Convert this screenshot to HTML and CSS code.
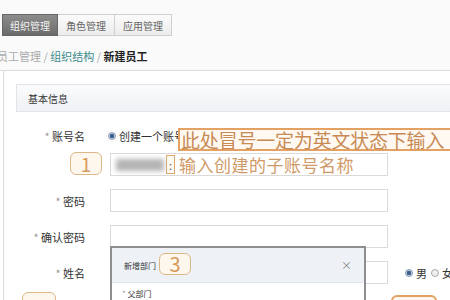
FILE: index.html
```html
<!DOCTYPE html>
<html lang="zh">
<head>
<meta charset="utf-8">
<link rel="stylesheet" href="styles.css">
</head>
<body>
<div class="top">
  <div class="tabs">
    <div class="tab active">组织管理</div>
    <div class="tab">角色管理</div>
    <div class="tab">应用管理</div>
  </div>
  <div class="crumb"><span class="c-gray">员工管理</span><span class="sep"> / </span><span class="c-link">组织结构</span><span class="sep"> / </span><span class="c-cur">新建员工</span></div>
</div>
<div class="main">
  <div class="panel-head">基本信息</div>
  <div class="form">
    <div class="row row-first">
      <div class="label"><span class="star">*</span> 账号名</div>
      <div class="radio-line"><span class="radio on"></span>创建一个账号</div>
    </div>
    <div class="row">
      <div class="label"></div>
      <div class="input">
        <span class="blob"></span>
        <span class="colon">:</span>
        <span class="hint">输入创建的子账号名称</span>
      </div>
    </div>
    <div class="row">
      <div class="label"><span class="star">*</span> 密码</div>
      <div class="input"></div>
    </div>
    <div class="row">
      <div class="label"><span class="star">*</span> 确认密码</div>
      <div class="input"></div>
    </div>
    <div class="row">
      <div class="label"><span class="star">*</span> 姓名</div>
      <div class="input"></div>
      <div class="sex"><span class="radio on"></span>男<span class="radio"></span>女</div>
    </div>
  </div>
</div>

<div class="note note-top">此处冒号一定为英文状态下输入</div>
<div class="badge badge-1">1</div>
<div class="badge badge-l"></div>
<div class="badge badge-r"></div>

<div class="dialog">
  <div class="dlg-head">
    <span class="dlg-title">新增部门</span>
    <span class="badge badge-3">3</span>
    <span class="close">×</span>
  </div>
  <div class="dlg-body">
    <div class="dlg-label"><span class="star">*</span> 父部门</div>
    <div class="dlg-input"></div>
  </div>
</div>
</body>
</html>
```

FILE: styles.css
```css
* { box-sizing: border-box; }
html, body { margin: 0; padding: 0; }
body {
  width: 450px;
  height: 300px;
  overflow: hidden;
  background: #fff;
  font-family: "Noto Sans CJK SC", "Noto Sans", sans-serif;
  color: #333;
  position: relative;
}
.top {
  height: 71px;
  background: #fafafa;
  border-bottom: 1px solid #dcdcdc;
  padding-top: 14px;
}
.tabs {
  display: flex;
  margin-left: 2px;
}
.tab {
  width: 57px;
  height: 22px;
  border: 1px solid #cfcfcf;
  border-left: none;
  background: linear-gradient(#fbfbfb, #ececec);
  color: #666;
  font-size: 10px;
  display: flex;
  align-items: center;
  justify-content: center;
}
.tab.active {
  width: 56px;
  border: 1px solid #666;
  background: linear-gradient(#8c8c8c, #6c6c6c);
  color: #f4f4f4;
}
.crumb {
  margin-top: 12px;
  margin-left: -3px;
  font-size: 11px;
  line-height: 16px;
  white-space: nowrap;
}
.c-gray { color: #aaa; }
.sep { color: #aaa; }
.c-link { color: #3b8a8c; }
.c-cur { color: #222; font-weight: bold; }
.main {
  margin-left: 3px;
  border-left: 1px solid #dcdcdc;
  padding-top: 13px;
  height: 229px;
}
.panel-head {
  margin-left: 12px;
  height: 28px;
  border: 1px solid #e2e4e8;
  border-right: none;
  background: linear-gradient(#fafbfc, #eff1f5);
  font-size: 10px;
  color: #333;
  padding-left: 11px;
  display: flex;
  align-items: center;
}
.form {
  margin-top: 12px;
  display: flex;
  flex-direction: column;
  gap: 13px;
}
.row {
  display: grid;
  grid-template-columns: 81px 278px auto;
  column-gap: 25px;
  height: 23px;
  align-items: center;
}
.row-first { margin-bottom: -7px; }
.label {
  text-align: right;
  font-size: 11px;
  color: #333;
  white-space: nowrap;
}
.star { color: #999; }
.radio-line {
  display: flex;
  align-items: center;
  font-size: 11px;
  margin-left: -2px;
  white-space: nowrap;
}
.radio {
  display: inline-block;
  width: 8px;
  height: 8px;
  border-radius: 50%;
  border: 1px solid #aaa;
  background: #eee;
  margin-right: 3px;
  position: relative;
}
.radio.on {
  background: radial-gradient(circle, #3d5f8f 0 2px, #c8d4e4 2.5px);
  border-color: #8898b0;
}
.input {
  height: 23px;
  border: 1px solid #dadada;
  background: #fff;
  display: flex;
  align-items: center;
}
.blob {
  width: 48px;
  height: 12px;
  margin-left: 5px;
  background: #b4b4b4;
  filter: blur(2.5px);
}
.colon {
  width: 9px;
  height: 19px;
  margin-left: 2px;
  border: 1px solid #dca870;
  background: #fffaf2;
  color: #555;
  font-size: 11px;
  display: flex;
  align-items: center;
  justify-content: center;
}
.hint {
  margin-left: 4px;
  font-size: 17px;
  color: #cf9a68;
  white-space: nowrap;
  letter-spacing: 0.5px;
}
.sex {
  margin-left: -8px;
  display: flex;
  align-items: center;
  font-size: 11px;
  white-space: nowrap;
}
.sex .radio:not(.on) { margin-left: 4px; }
.note {
  position: absolute;
  left: 178px;
  top: 128px;
  width: 276px;
  height: 23px;
  border: 2px solid #e3a163;
  background: #fff9f1;
  color: #c88a55;
  font-size: 19px;
  line-height: 19px;
  padding-left: 1px;
  white-space: nowrap;
  letter-spacing: -0.2px;
}
.badge {
  border: 1px solid #dfb88a;
  border-radius: 6px;
  background: #fdf7ee;
  color: #d79b5c;
  display: flex;
  align-items: center;
  justify-content: center;
}
.badge-1 {
  position: absolute;
  left: 70px;
  top: 152px;
  width: 32px;
  height: 23px;
  font-size: 19px;
}
.badge-l {
  position: absolute;
  left: 22px;
  top: 292px;
  width: 34px;
  height: 20px;
}
.badge-r {
  position: absolute;
  left: 391px;
  top: 295px;
  width: 46px;
  height: 20px;
  border: 2px solid #e3a163;
}
.dialog {
  position: absolute;
  left: 110px;
  top: 246px;
  width: 256px;
  height: 60px;
  border: 2px solid #8e8e8e;
  background: #fff;
}
.dlg-head {
  height: 35px;
  background: #eef2f7;
  border-bottom: 1px solid #e2e6ec;
  display: flex;
  align-items: center;
  padding-left: 12px;
  padding-right: 12px;
}
.dlg-title {
  font-size: 8px;
  color: #333;
}
.badge-3 {
  margin-left: 3px;
  width: 32px;
  height: 22px;
  font-size: 20px;
  margin-top: -3px;
}
.close {
  margin-left: auto;
  font-size: 11px;
  color: #888;
}
.dlg-body {
  padding: 5px 0 0 10px;
}
.dlg-label {
  font-size: 8px;
  color: #333;
}
.dlg-input {
  margin-top: 3px;
  width: 158px;
  height: 20px;
  border: 1px solid #ccc;
}
```
